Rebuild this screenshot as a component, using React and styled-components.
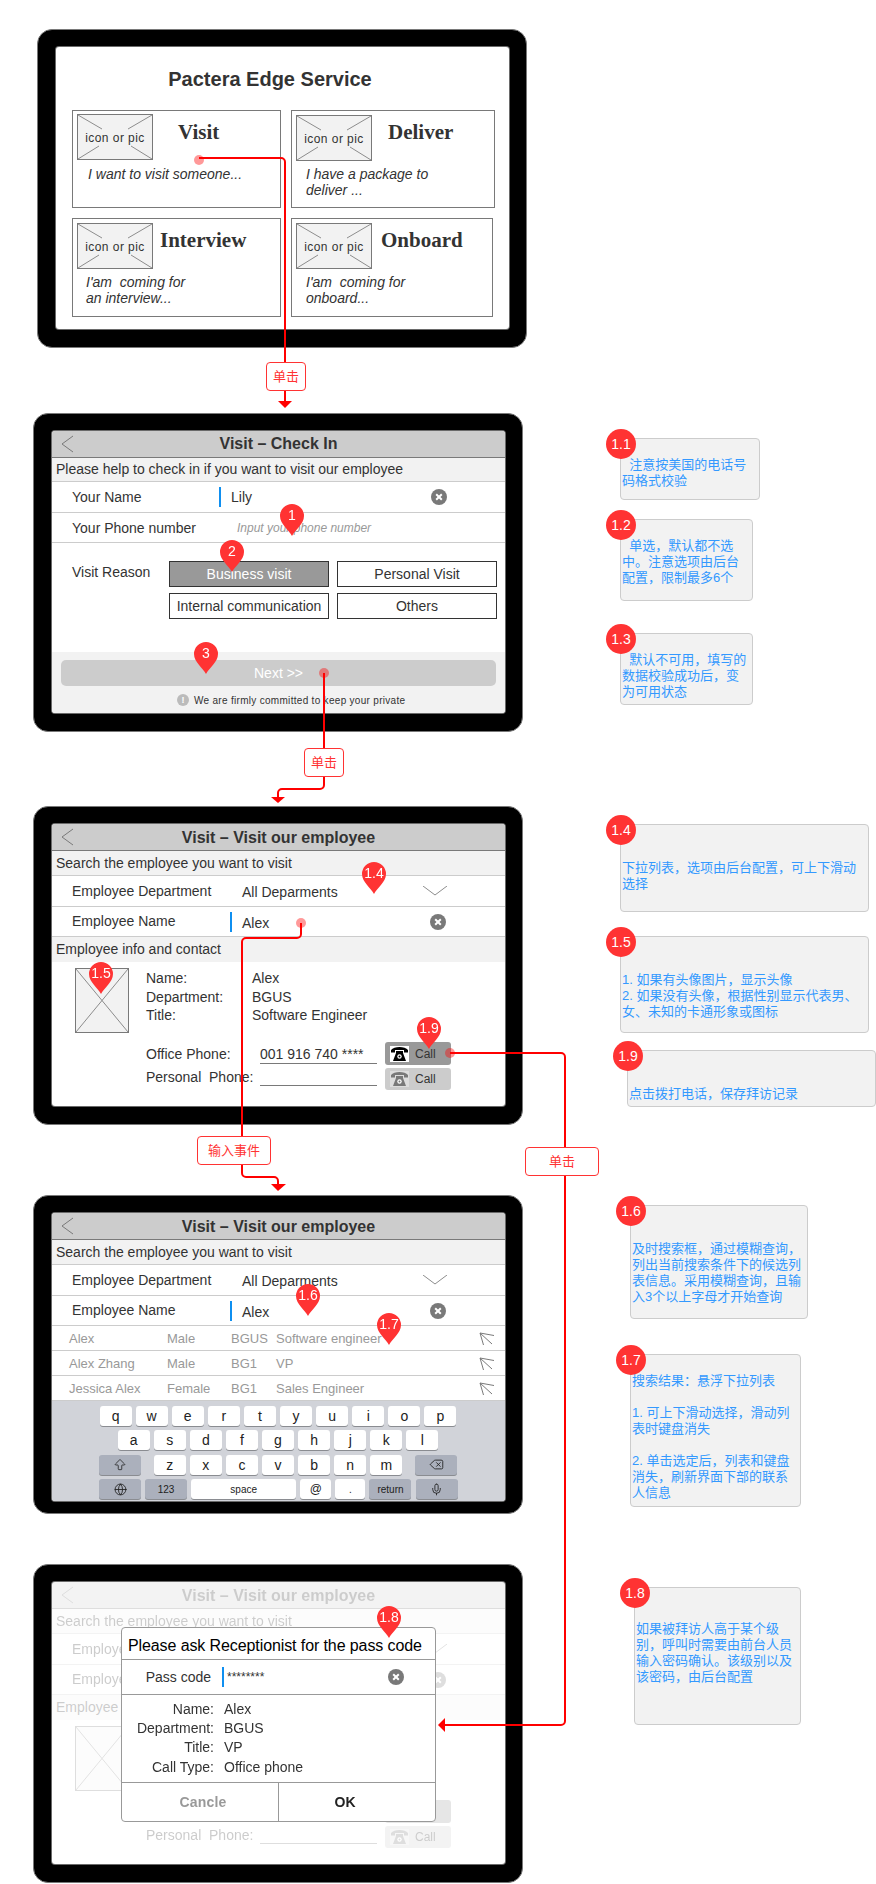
import styled, { createGlobalStyle } from 'styled-components';
import { ArrowBigUp, Delete, Globe, Mic } from 'lucide-react';

const SANS = `'Liberation Sans', Arial, 'Noto Sans CJK SC', sans-serif`;
const RED = '#ff3333';

const GlobalStyle = createGlobalStyle`
    html, body {
        margin: 0;
        padding: 0;
        background: #fff;
        font-family: ${SANS};
        color: #333;
    }
`;

// the wireframe is a free canvas: tablets, notes and pins are placed on it
const Canvas = styled.div`
    position: relative;
    width: 876px;
    height: 1884px;
    overflow: hidden;
    font-size: 14px;
`;

const Tablet = styled.section`
    position: absolute;
    left: ${(p) => p.$x}px;
    top: ${(p) => p.$y}px;
    width: 490px;
    height: 319px;
    box-sizing: border-box;
    padding: 17px 18px;
    background: #000;
    border: 1px solid #797979;
    border-radius: 15px;
`;

const Screen = styled.div`
    position: relative;
    width: 453px;
    min-height: 282px;
    background: #fff;
    border-radius: 3px;
    box-shadow: 0 0 0 1px #6a6a6a;
    display: flex;
    flex-direction: column;
    overflow: hidden;
`;

const ServiceTitle = styled.h1`
    margin: 0;
    width: 428px;
    height: 63px;
    line-height: 65px;
    text-align: center;
    font-size: 20px;
    font-weight: 700;
    color: #333;
`;

const CardGrid = styled.div`
    display: grid;
    grid-template-columns: 209px 204px;
    grid-template-rows: 98px 99px;
    gap: 10px;
    margin-left: 16px;
`;

const Card = styled.article`
    box-sizing: border-box;
    width: ${(p) => p.$w || 'auto'};
    padding: 3px 0 0 4px;
    border: 1px solid #797979;
`;

const CardHead = styled.div`
    display: flex;
    height: 52px;
`;

const PicBox = styled.div`
    position: relative;
    flex: none;
    box-sizing: border-box;
    width: 76px;
    height: 46px;
    margin-top: ${(p) => (p.$drop ? 1 : 0)}px;
    padding-top: 1px;
    display: flex;
    align-items: center;
    justify-content: center;
    background: #f2f2f2;
    border: 1px solid #797979;
    font-size: 12px;
    letter-spacing: 0.45px;
    svg {
        position: absolute;
        inset: 0;
    }
`;

const CardTitle = styled.h2`
    margin: 6px 0 0 ${(p) => p.$gap}px;
    font-family: 'Liberation Serif', serif;
    font-size: 21px;
    line-height: 24px;
    font-weight: 700;
    color: #333;
`;

const CardText = styled.p`
    margin: 0 0 0 ${(p) => p.$indent}px;
    font-size: 14px;
    line-height: 16px;
    font-style: italic;
    white-space: pre;
`;

const Header = styled.header`
    flex: none;
    box-sizing: border-box;
    display: grid;
    grid-template-columns: 1fr auto 1fr;
    align-items: center;
    height: 27px;
    background: #ccc;
    border-bottom: 1px solid #797979;
    svg {
        margin-left: 9px;
    }
`;

const HeaderTitle = styled.h2`
    margin: 0;
    padding-top: ${(p) => p.$drop || 0}px;
    font-size: 16px;
    font-weight: 700;
    color: #333;
`;

const SubBar = styled.div`
    flex: none;
    box-sizing: border-box;
    height: ${(p) => p.$h}px;
    padding: 0 0 1px 4px;
    display: flex;
    align-items: center;
    background: #f2f2f2;
    border-bottom: ${(p) => (p.$flat ? 'none' : '1px solid #ccc')};
    font-size: 14px;
`;

const Row = styled.div`
    flex: none;
    box-sizing: border-box;
    height: ${(p) => p.$h}px;
    display: flex;
    align-items: center;
    border-bottom: 1px solid #ccc;
`;

const Label = styled.span`
    flex: none;
    box-sizing: border-box;
    width: ${(p) => p.$w}px;
    margin-left: 20px;
    padding-bottom: ${(p) => p.$lift || 0}px;
`;

const Caret = styled.i`
    flex: none;
    width: 2px;
    height: 20px;
    background: #0f8ff0;
`;

const FieldValue = styled.span`
    margin-left: ${(p) => p.$gap || 0}px;
    padding-top: ${(p) => p.$drop || 0}px;
    font-size: ${(p) => p.$size || 14}px;
    color: #333;
`;

const Placeholder = styled.span`
    font-size: 12px;
    font-style: italic;
    color: #999;
`;

const EndIcon = styled.span`
    display: flex;
    margin-left: auto;
    margin-right: ${(p) => p.$right}px;
`;

const ReasonArea = styled.div`
    flex: none;
    box-sizing: border-box;
    height: 109px;
    padding-top: 18px;
    display: flex;
`;

const ReasonLabel = styled.span`
    flex: none;
    width: 97px;
    margin-left: 20px;
    line-height: 22px;
`;

const ReasonGrid = styled.div`
    display: grid;
    grid-template-columns: 160px 160px;
    grid-auto-rows: 26px;
    gap: 6px 8px;
`;

const ReasonButton = styled.button`
    padding: 0;
    font: 14px ${SANS};
    color: ${(p) => (p.$on ? '#fff' : '#333')};
    background: ${(p) => (p.$on ? '#999' : '#fff')};
    border: 1px solid #333;
`;

const Footer = styled.footer`
    flex: 1;
    padding: 8px 9px 0 9px;
    background: #f2f2f2;
`;

const NextButton = styled.button`
    display: block;
    width: 100%;
    height: 26px;
    padding: 0;
    font: 14px ${SANS};
    color: #fff;
    background: #ccc;
    border: none;
    border-radius: 5px;
`;

const PrivacyNote = styled.div`
    display: flex;
    align-items: center;
    gap: 5px;
    margin: 8px 0 0 116px;
    font-size: 10px;
    letter-spacing: 0.3px;
    white-space: nowrap;
`;

const InfoDot = styled.i`
    width: 12px;
    height: 12px;
    border-radius: 50%;
    background: #bbb;
    color: #fff;
    font: 700 9px/12px ${SANS};
    text-align: center;
    letter-spacing: 0;
`;

const ContactArea = styled.div`
    display: flex;
    padding: 6px 0 0 23px;
`;

const Avatar = styled.div`
    flex: none;
    box-sizing: border-box;
    width: 54px;
    height: 65px;
    background: #f2f2f2;
    border: 1px solid #797979;
`;

const ContactBody = styled.div`
    margin-left: 17px;
    padding-top: 1px;
`;

const ContactGrid = styled.dl`
    margin: 0 0 17.5px;
    display: grid;
    grid-template-columns: 106px auto;
    grid-auto-rows: 18.5px;
    align-items: center;
    dt, dd {
        margin: 0;
    }
`;

const PhoneRow = styled.div`
    display: flex;
    align-items: center;
    height: ${(p) => p.$h}px;
    margin-bottom: 3px;
    white-space: pre;
`;

const PhoneLabel = styled.span`
    flex: none;
    box-sizing: border-box;
    width: 114px;
    padding-bottom: ${(p) => p.$lift || 0}px;
`;

const PhoneField = styled.span`
    flex: none;
    align-self: flex-start;
    box-sizing: border-box;
    width: 117px;
    height: ${(p) => p.$h}px;
    line-height: 24px;
    border-bottom: 1px solid #797979;
`;

const CallButton = styled.button`
    flex: none;
    display: flex;
    align-items: center;
    gap: 6px;
    width: 66px;
    height: 100%;
    margin-left: 8px;
    padding: 0 0 0 5px;
    font: 12px ${SANS};
    color: #333;
    background: ${(p) => (p.$on ? '#999' : '#ccc')};
    border: none;
    border-radius: 3px;
`;

const ResultRow = styled.div`
    flex: none;
    box-sizing: border-box;
    height: 25px;
    padding: 1px 0 0 17px;
    display: grid;
    grid-template-columns: 98px 64px 45px 1fr auto;
    align-items: center;
    border-bottom: 1px solid #ccc;
    font-size: 13px;
    color: #999;
    svg {
        margin-right: 11px;
    }
`;

const Keyboard = styled.div`
    height: 100px;
    box-sizing: border-box;
    padding: 5px 48px 0 47px;
    display: flex;
    flex-direction: column;
    gap: 4.4px;
    background: #d1d3d9;
`;

const KeyRow = styled.div`
    display: flex;
    justify-content: ${(p) => p.$justify || 'center'};
    gap: 4.1px;
`;

const Key = styled.span`
    flex: none;
    box-sizing: border-box;
    width: ${(p) => p.$w || 32}px;
    height: 20px;
    display: flex;
    align-items: center;
    justify-content: center;
    font-size: ${(p) => p.$size || 14}px;
    color: #222;
    background: ${(p) => (p.$dark ? '#abb0bc' : '#fff')};
    border-radius: 3px;
    box-shadow: 0 1px 0 #8a8c91;
`;

const Faded = styled.div`
    opacity: 0.25;
    display: flex;
    flex-direction: column;
`;

const Dialog = styled.div`
    position: absolute;
    left: 69px;
    top: 45px;
    box-sizing: border-box;
    width: 315px;
    height: 195px;
    background: #fff;
    border: 1px solid #999;
    border-radius: 4px;
    display: flex;
    flex-direction: column;
`;

const DialogTitle = styled.div`
    flex: none;
    box-sizing: border-box;
    height: 32px;
    padding-left: 6px;
    line-height: 35px;
    font-size: 16px;
    letter-spacing: -0.1px;
    color: #000;
    white-space: nowrap;
    border-bottom: 1px solid #999;
`;

const DialogField = styled.div`
    flex: none;
    box-sizing: border-box;
    height: 35px;
    display: flex;
    align-items: center;
    border-bottom: 1px solid #999;
`;

const DialogLabel = styled.span`
    flex: none;
    width: 89px;
    text-align: right;
    margin-right: 11px;
`;

const DialogInfo = styled.dl`
    flex: none;
    box-sizing: border-box;
    height: 88px;
    margin: 0;
    padding-top: 4px;
    display: grid;
    grid-template-columns: 92px auto;
    grid-auto-rows: 19.3px;
    column-gap: 10px;
    align-items: center;
    border-bottom: 1px solid #999;
    dt {
        text-align: right;
    }
    dd {
        margin: 0;
    }
`;

const DialogActions = styled.div`
    flex: 1;
    display: flex;
`;

const DialogButton = styled.button`
    flex: none;
    box-sizing: border-box;
    width: ${(p) => p.$w}px;
    padding: 0 ${(p) => p.$insetRight || 0}px 0 ${(p) => p.$insetLeft || 0}px;
    font: 700 14px ${SANS};
    letter-spacing: ${(p) => (p.$muted ? '0.2px' : '0')};
    color: ${(p) => (p.$muted ? '#999' : '#222')};
    background: none;
    border: none;
    border-right: ${(p) => (p.$divider ? '1px solid #999' : 'none')};
`;

const Note = styled.aside`
    position: absolute;
    left: ${(p) => p.$x}px;
    top: ${(p) => p.$y}px;
    width: ${(p) => p.$w}px;
    height: ${(p) => p.$h}px;
    box-sizing: border-box;
    padding: ${(p) => p.$top}px 0 0 1px;
    background: #f2f2f2;
    border: 1px solid #ccc;
    border-radius: 4px;
    font-size: 13px;
    line-height: 16px;
    color: #3399ff;
    white-space: pre;
`;

const NoteBadge = styled.span`
    position: absolute;
    left: -15px;
    top: -10px;
    width: 30px;
    height: 30px;
    border-radius: 50%;
    background: ${RED};
    color: #fff;
    font-size: 14px;
    line-height: 30px;
    text-align: center;
`;

const Wires = styled.svg`
    position: absolute;
    inset: 0;
`;

const Tag = styled.span`
    position: absolute;
    left: ${(p) => p.$x}px;
    top: ${(p) => p.$y}px;
    width: ${(p) => p.$w}px;
    height: 29px;
    box-sizing: border-box;
    background: #fff;
    border: 1px solid ${RED};
    border-radius: 4px;
    color: ${RED};
    font-size: 13px;
    line-height: 27px;
    text-align: center;
`;

const PinMark = styled.div`
    position: absolute;
    left: ${(p) => p.$x}px;
    top: ${(p) => p.$y}px;
    width: 24px;
    height: 32px;
    color: #fff;
    font-size: 14px;
    line-height: 23px;
    text-align: center;
    svg {
        position: absolute;
        inset: 0;
    }
    span {
        position: relative;
    }
`;

const BackArrow = () => (
    <svg width="13" height="18" viewBox="0 0 13 18" fill="none" stroke="#797979" strokeWidth="1">
        <polyline points="12,1 1,9 12,17" />
    </svg>
);

const ClearIcon = () => (
    <svg width="16" height="16" viewBox="0 0 16 16">
        <circle cx="8" cy="8" r="8" fill="#797979" />
        <path d="M5.2 5.2l5.6 5.6M10.8 5.2l-5.6 5.6" stroke="#fff" strokeWidth="2" />
    </svg>
);

const PhoneIcon = ({ on }) => (
    <svg width="19" height="16" viewBox="0 0 19 16">
        <rect width="19" height="16" fill={on ? '#fff' : '#ddd'} />
        <g fill={on ? '#000' : '#797979'}>
            <path d="M1 4C4 0 15 0 18 4v2.500h-4V4H5v2.500H1z" />
            <path d="M6 5h7v2l3 8H3l3-8z" />
        </g>
        <circle cx="9.500" cy="10.500" r="2.200" fill="#fff" />
        <circle cx="9.500" cy="10.500" r="1" fill={on ? '#000' : '#797979'} />
    </svg>
);

const JumpIcon = () => (
    <svg width="15" height="14" viewBox="0 0 15 14" fill="none" stroke="#797979" strokeWidth="1">
        <path d="M15 3.500L1 1l3.500 12M1 1l12 11" />
    </svg>
);

const Pic = ({ drop }) => (
    <PicBox $drop={drop}>
        <svg width="74" height="44" viewBox="0 0 74 44" fill="none" stroke="#8c8c8c" strokeWidth="1">
            <path d="M0 0l24 14M74 0L50 14M0 44l21-13M74 44L53 31" />
        </svg>
        <span>icon or pic</span>
    </PicBox>
);

const Pin = ({ x, y, label }) => (
    <PinMark $x={x} $y={y}>
        <svg width="24" height="32" viewBox="0 0 24 32">
            <path d="M12 32C9 26 0 20 0 12a12 12 0 1 1 24 0c0 8-9 14-12 20z" fill={RED} />
        </svg>
        <span>{label}</span>
    </PinMark>
);

const SearchForm = () => (
    <>
        <Header>
            <BackArrow />
            <HeaderTitle $drop={1}>Visit – Visit our employee</HeaderTitle>
        </Header>
        <SubBar $h={25}>Search the employee you want to visit</SubBar>
        <Row $h={31}>
            <Label $w={170}>Employee Department</Label>
            <FieldValue $drop={1}>All Deparments</FieldValue>
            <EndIcon $right={58}>
                <svg width="24" height="10" viewBox="0 0 24 10" fill="none" stroke="#8c8c8c" strokeWidth="1">
                    <polyline points="0,0 12,9 24,0" />
                </svg>
            </EndIcon>
        </Row>
        <Row $h={30}>
            <Label $w={158} $lift={2}>Employee Name</Label>
            <Caret />
            <FieldValue $gap={10} $drop={2}>Alex</FieldValue>
            <EndIcon $right={59}>
                <ClearIcon />
            </EndIcon>
        </Row>
    </>
);

const ContactDetails = () => (
    <ContactArea>
        <Avatar>
            <svg width="52" height="63" viewBox="0 0 52 63" fill="none" stroke="#8c8c8c" strokeWidth="1">
                <path d="M0 0l52 63M52 0L0 63" />
            </svg>
        </Avatar>
        <ContactBody>
            <ContactGrid>
                <dt>Name:</dt>
                <dd>Alex</dd>
                <dt>Department:</dt>
                <dd>BGUS</dd>
                <dt>Title:</dt>
                <dd>Software Engineer</dd>
            </ContactGrid>
            <PhoneRow $h={23}>
                <PhoneLabel>Office Phone:</PhoneLabel>
                <PhoneField $h={22}>001 916 740 ****</PhoneField>
                <CallButton $on>
                    <PhoneIcon on />
                    Call
                </CallButton>
            </PhoneRow>
            <PhoneRow $h={22}>
                <PhoneLabel $lift={4}>Personal  Phone:</PhoneLabel>
                <PhoneField $h={18} />
                <CallButton>
                    <PhoneIcon />
                    Call
                </CallButton>
            </PhoneRow>
        </ContactBody>
    </ContactArea>
);

const results = [
    ['Alex', 'Male', 'BGUS', 'Software engineer'],
    ['Alex Zhang', 'Male', 'BG1', 'VP'],
    ['Jessica Alex', 'Female', 'BG1', 'Sales Engineer'],
];

const notes = [
    { id: '1.1', x: 620, y: 438, w: 140, h: 62, top: 18, text: '  注意按美国的电话号\n码格式校验' },
    { id: '1.2', x: 620, y: 519, w: 133, h: 82, top: 18, text: '  单选，默认都不选\n中。注意选项由后台\n配置，限制最多6个' },
    { id: '1.3', x: 620, y: 633, w: 133, h: 72, top: 18, text: '  默认不可用，填写的\n数据校验成功后，变\n为可用状态' },
    { id: '1.4', x: 620, y: 824, w: 249, h: 88, top: 35, text: '下拉列表，选项由后台配置，可上下滑动\n选择' },
    { id: '1.5', x: 620, y: 936, w: 249, h: 97, top: 35, text: '1. 如果有头像图片，显示头像\n2. 如果没有头像，根据性别显示代表男、\n女、未知的卡通形象或图标' },
    { id: '1.9', x: 627, y: 1050, w: 249, h: 57, top: 35, text: '点击拨打电话，保存拜访记录' },
    { id: '1.6', x: 630, y: 1205, w: 178, h: 114, top: 35, text: '及时搜索框，通过模糊查询，\n列出当前搜索条件下的候选列\n表信息。采用模糊查询，且输\n入3个以上字母才开始查询' },
    { id: '1.7', x: 630, y: 1354, w: 171, h: 153, top: 18, text: '搜索结果：悬浮下拉列表\n\n1. 可上下滑动选择，滑动列\n表时键盘消失\n\n2. 单击选定后，列表和键盘\n消失，刷新界面下部的联系\n人信息' },
    { id: '1.8', x: 634, y: 1587, w: 167, h: 138, top: 33, text: '如果被拜访人高于某个级\n别，呼叫时需要由前台人员\n输入密码确认。该级别以及\n该密码，由后台配置' },
];

const pins = [
    ['1', 280, 504],
    ['2', 220, 540],
    ['3', 194, 642],
    ['1.4', 362, 862],
    ['1.5', 89, 962],
    ['1.9', 417, 1017],
    ['1.6', 296, 1284],
    ['1.7', 377, 1313],
    ['1.8', 377, 1606],
];

export default function App() {
    return (
        <Canvas>
            <GlobalStyle />

            <Tablet $x={37} $y={29}>
                <Screen>
                    <ServiceTitle>Pactera Edge Service</ServiceTitle>
                    <CardGrid>
                        <Card>
                            <CardHead>
                                <Pic />
                                <CardTitle $gap={25}>Visit</CardTitle>
                            </CardHead>
                            <CardText $indent={11}>I want to visit someone...</CardText>
                        </Card>
                        <Card>
                            <CardHead>
                                <Pic drop />
                                <CardTitle $gap={16}>Deliver</CardTitle>
                            </CardHead>
                            <CardText $indent={10}>{'I have a package to\ndeliver ...'}</CardText>
                        </Card>
                        <Card>
                            <CardHead>
                                <Pic drop />
                                <CardTitle $gap={7}>Interview</CardTitle>
                            </CardHead>
                            <CardText $indent={9}>{"I'am  coming for\nan interview..."}</CardText>
                        </Card>
                        <Card $w="202px">
                            <CardHead>
                                <Pic drop />
                                <CardTitle $gap={9}>Onboard</CardTitle>
                            </CardHead>
                            <CardText $indent={10}>{"I'am  coming for\nonboard..."}</CardText>
                        </Card>
                    </CardGrid>
                </Screen>
            </Tablet>

            <Tablet $x={33} $y={413}>
                <Screen>
                    <Header>
                        <BackArrow />
                        <HeaderTitle>Visit – Check In</HeaderTitle>
                    </Header>
                    <SubBar $h={24}>Please help to check in if you want to visit our employee</SubBar>
                    <Row $h={31}>
                        <Label $w={147}>Your Name</Label>
                        <Caret />
                        <FieldValue $gap={10}>Lily</FieldValue>
                        <EndIcon $right={58}>
                            <ClearIcon />
                        </EndIcon>
                    </Row>
                    <Row $h={30}>
                        <Label $w={165}>Your Phone number</Label>
                        <Placeholder>Input your phone number</Placeholder>
                    </Row>
                    <ReasonArea>
                        <ReasonLabel>Visit Reason</ReasonLabel>
                        <ReasonGrid>
                            <ReasonButton $on>Business visit</ReasonButton>
                            <ReasonButton>Personal Visit</ReasonButton>
                            <ReasonButton>Internal communication</ReasonButton>
                            <ReasonButton>Others</ReasonButton>
                        </ReasonGrid>
                    </ReasonArea>
                    <Footer>
                        <NextButton>Next &gt;&gt;</NextButton>
                        <PrivacyNote>
                            <InfoDot>!</InfoDot>
                            We are firmly committed to keep your private
                        </PrivacyNote>
                    </Footer>
                </Screen>
            </Tablet>

            <Tablet $x={33} $y={806}>
                <Screen>
                    <SearchForm />
                    <SubBar $h={25} $flat>Employee info and contact</SubBar>
                    <ContactDetails />
                </Screen>
            </Tablet>

            <Tablet $x={33} $y={1195}>
                <Screen>
                    <SearchForm />
                    {results.map(([name, sex, dept, title]) => (
                        <ResultRow key={name}>
                            <span>{name}</span>
                            <span>{sex}</span>
                            <span>{dept}</span>
                            <span>{title}</span>
                            <JumpIcon />
                        </ResultRow>
                    ))}
                    <Keyboard>
                        <KeyRow>
                            {'qwertyuiop'.split('').map((k) => (
                                <Key key={k}>{k}</Key>
                            ))}
                        </KeyRow>
                        <KeyRow>
                            {'asdfghjkl'.split('').map((k) => (
                                <Key key={k}>{k}</Key>
                            ))}
                        </KeyRow>
                        <KeyRow $justify="space-between">
                            <Key $w={42} $dark>
                                <ArrowBigUp size={14} strokeWidth={1.4} />
                            </Key>
                            <KeyRow>
                                {'zxcvbnm'.split('').map((k) => (
                                    <Key key={k}>{k}</Key>
                                ))}
                            </KeyRow>
                            <Key $w={42} $dark>
                                <Delete size={15} strokeWidth={1.4} />
                            </Key>
                        </KeyRow>
                        <KeyRow $justify="space-between">
                            <Key $w={42} $dark>
                                <Globe size={13} strokeWidth={1.6} />
                            </Key>
                            <Key $w={42} $dark $size={10}>123</Key>
                            <Key $w={105} $size={10}>space</Key>
                            <Key $w={31} $size={12}>@</Key>
                            <Key $w={30} $size={10}>.</Key>
                            <Key $w={42} $dark $size={10}>return</Key>
                            <Key $w={42} $dark>
                                <Mic size={13} strokeWidth={1.6} />
                            </Key>
                        </KeyRow>
                    </Keyboard>
                </Screen>
            </Tablet>

            <Tablet $x={33} $y={1564}>
                <Screen>
                    <Faded>
                        <SearchForm />
                        <SubBar $h={25} $flat>Employee info and contact</SubBar>
                        <ContactDetails />
                    </Faded>
                    <Dialog>
                        <DialogTitle>Please ask Receptionist for the pass code</DialogTitle>
                        <DialogField>
                            <DialogLabel>Pass code</DialogLabel>
                            <Caret />
                            <FieldValue $gap={3} $size={12}>********</FieldValue>
                            <EndIcon $right={31}>
                                <ClearIcon />
                            </EndIcon>
                        </DialogField>
                        <DialogInfo>
                            <dt>Name:</dt>
                            <dd>Alex</dd>
                            <dt>Department:</dt>
                            <dd>BGUS</dd>
                            <dt>Title:</dt>
                            <dd>VP</dd>
                            <dt>Call Type:</dt>
                            <dd>Office phone</dd>
                        </DialogInfo>
                        <DialogActions>
                            <DialogButton $w={157} $muted $divider $insetLeft={6}>Cancle</DialogButton>
                            <DialogButton $w={156} $insetRight={24}>OK</DialogButton>
                        </DialogActions>
                    </Dialog>
                </Screen>
            </Tablet>

            {notes.map((n) => (
                <Note key={n.id} $x={n.x} $y={n.y} $w={n.w} $h={n.h} $top={n.top}>
                    <NoteBadge>{n.id}</NoteBadge>
                    {n.text}
                </Note>
            ))}

            <Wires width="876" height="1884" viewBox="0 0 876 1884">
                <g fill="none" stroke="#f00" strokeWidth="2">
                    <path d="M199 158H281a4 4 0 0 1 4 4V402" />
                    <path d="M324 673V785a4 4 0 0 1-4 4H282a4 4 0 0 0-4 4V798" />
                    <path d="M301 923V934a4 4 0 0 1-4 4H246a4 4 0 0 0-4 4V1173a4 4 0 0 0 4 4H274a4 4 0 0 1 4 4V1184" />
                    <path d="M450 1053H561a4 4 0 0 1 4 4V1721a4 4 0 0 1-4 4H444" />
                </g>
                <g fill="#f00">
                    <path d="M285 408l-7-7h14z" />
                    <path d="M278 803l-7-6h14z" />
                    <path d="M278 1191l-7-7h15z" />
                    <path d="M438 1725l7-7v14z" />
                </g>
                <g fill="#f00" fillOpacity="0.4">
                    <circle cx="199" cy="160" r="5" />
                    <circle cx="324" cy="673" r="5" />
                    <circle cx="301" cy="923" r="5" />
                    <circle cx="450" cy="1053" r="5" />
                </g>
            </Wires>

            <Tag $x={266} $y={362} $w={40}>单击</Tag>
            <Tag $x={304} $y={748} $w={40}>单击</Tag>
            <Tag $x={197} $y={1136} $w={74}>输入事件</Tag>
            <Tag $x={525} $y={1147} $w={74}>单击</Tag>

            {pins.map(([label, x, y]) => (
                <Pin key={label} x={x} y={y} label={label} />
            ))}
        </Canvas>
    );
}
